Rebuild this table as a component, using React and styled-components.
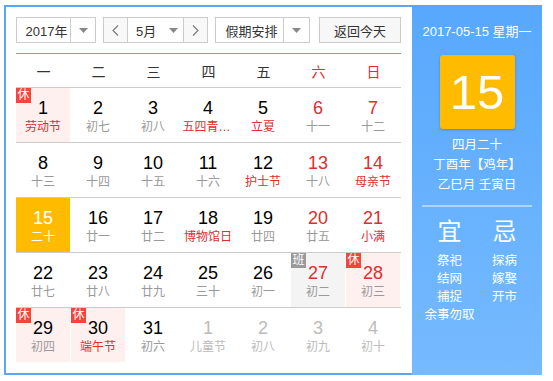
import React from 'react'
import styled, { createGlobalStyle } from 'styled-components'

const GlobalStyle = createGlobalStyle`
  body {
    margin: 0;
    background: #fff;
    font-family: "Liberation Sans", "Noto Sans CJK SC", sans-serif;
  }
`

const Frame = styled.div`
  display: flex;
  width: 538px;
  height: 370px;
  margin: 5px 0 0 4px;
  background: #5ca6f4;
`

const Main = styled.div`
  width: 385px;
  margin: 2px 0 2px 2px;
  padding: 10px 11px 0 10px;
  background: #fff;
`

const Toolbar = styled.div`
  display: flex;
  height: 26px;
  gap: 7px;
`

const Select = styled.div`
  display: flex;
  box-sizing: border-box;
  width: ${p => p.$w}px;
  height: 26px;
  border: 1px solid #ccc;
  background: #fff;
`

const SelectLabel = styled.div`
  flex: 1;
  display: flex;
  align-items: center;
  justify-content: ${p => (p.$left ? 'flex-start' : 'center')};
  padding-left: ${p => p.$pad || 0}px;
  font-size: 13px;
  color: #333;
`

const ArrowBox = styled.div`
  display: flex;
  align-items: center;
  justify-content: center;
  width: ${p => p.$w || 23}px;
  border-left: ${p => (p.$noline ? 'none' : '1px solid #ccc')};
  border-right: ${p => (p.$rline ? '1px solid #ccc' : 'none')};
  background: ${p => p.$bg || '#fff'};
`

const TodayButton = styled.button`
  box-sizing: border-box;
  width: 82px;
  height: 26px;
  margin-left: auto;
  padding: 0;
  border: 1px solid #ccc;
  background: #f7f7f7;
  font-family: inherit;
  font-size: 13px;
  color: #333;
`

const Calendar = styled.div`
  margin-top: 10px;
  border-top: 1px solid #5ca6f4;
`

const WeekHeader = styled.div`
  display: grid;
  grid-template-columns: repeat(7, 55px);
  height: 33px;
  border-bottom: 1px solid #ccc;
`

const WeekDay = styled.div`
  display: flex;
  align-items: center;
  justify-content: center;
  font-size: 14px;
  color: ${p => (p.$weekend ? '#e02d2d' : '#333')};
`

const Week = styled.div`
  display: grid;
  grid-template-columns: repeat(7, 55px);
  border-bottom: 1px solid #ccc;
  &:last-child {
    border-bottom: none;
  }
`

const cellBg = { rest: '#fff0f0', work: '#f4f4f4', today: '#ffbb00' }

const Day = styled.div`
  position: relative;
  box-sizing: border-box;
  width: 54px;
  height: 54px;
  padding-top: 10px;
  text-align: center;
  background: ${p => cellBg[p.$kind] || '#fff'};
`

const DayNum = styled.div`
  font-size: 18px;
  line-height: 20px;
  color: ${p => p.$color};
`

const DayNote = styled.div`
  max-width: 51px;
  margin: 1px auto 0;
  overflow: hidden;
  white-space: nowrap;
  text-overflow: ellipsis;
  font-size: 12px;
  line-height: 16px;
  color: ${p => p.$color};
`

const Badge = styled.span`
  position: absolute;
  left: 0;
  top: 0;
  width: 15px;
  height: 15px;
  background: ${p => (p.$work ? '#999' : '#f5443a')};
  color: #fff;
  font-size: 12px;
  line-height: 15px;
  text-align: center;
`

const Side = styled.div`
  display: flex;
  flex-direction: column;
  align-items: center;
  box-sizing: border-box;
  width: 130px;
  padding-top: 20px;
  background: linear-gradient(#57a8fd, #76baff);
  color: #fff;
`

const SideDate = styled.div`
  font-size: 13px;
  line-height: 14px;
`

const BigDay = styled.div`
  width: 75px;
  height: 74px;
  margin-top: 16px;
  border-radius: 3px;
  background: #ffbb00;
  box-shadow: 0 1px 3px rgba(0, 0, 0, 0.2);
  font-size: 49px;
  line-height: 74px;
  text-align: center;
`

const LunarInfo = styled.div`
  margin-top: 6px;
  font-size: 12.5px;
  line-height: 20px;
  text-align: center;
`

const Divider = styled.div`
  align-self: stretch;
  height: 2px;
  margin: 10px 10px 0;
  background: rgba(255, 255, 255, 0.45);
`

const Omens = styled.div`
  display: grid;
  grid-template-columns: 55px 55px;
  margin-top: 11px;
`

const OmenColumn = styled.div`
  display: flex;
  flex-direction: column;
  align-items: center;
`

const OmenTitle = styled.div`
  margin-bottom: 6px;
  font-size: 24px;
  line-height: 28px;
`

const OmenItem = styled.div`
  font-size: 12.5px;
  line-height: 18px;
  white-space: nowrap;
`

const Caret = () => (
  <svg width="9" height="5" viewBox="0 0 9 5">
    <path d="M0 0h9L4.5 5z" fill="#888" />
  </svg>
)

const Chevron = ({ dir }) => (
  <svg width="7" height="11" viewBox="0 0 7 11">
    <path
      d={dir === 'left' ? 'M6 0.5L1 5.5L6 10.5' : 'M1 0.5L6 5.5L1 10.5'}
      fill="none"
      stroke="#777"
      strokeWidth="1.1"
    />
  </svg>
)

// n: number, t: note, h: holiday name, w: weekend, b: badge, o: other month
const weeks = [
  [
    { n: 1, t: '劳动节', h: 1, b: 'rest' },
    { n: 2, t: '初七' },
    { n: 3, t: '初八' },
    { n: 4, t: '五四青年节', h: 1 },
    { n: 5, t: '立夏', h: 1 },
    { n: 6, t: '十一', w: 1 },
    { n: 7, t: '十二', w: 1 },
  ],
  [
    { n: 8, t: '十三' },
    { n: 9, t: '十四' },
    { n: 10, t: '十五' },
    { n: 11, t: '十六' },
    { n: 12, t: '护士节', h: 1 },
    { n: 13, t: '十八', w: 1 },
    { n: 14, t: '母亲节', h: 1, w: 1 },
  ],
  [
    { n: 15, t: '二十', today: 1 },
    { n: 16, t: '廿一' },
    { n: 17, t: '廿二' },
    { n: 18, t: '博物馆日', h: 1 },
    { n: 19, t: '廿四' },
    { n: 20, t: '廿五', w: 1 },
    { n: 21, t: '小满', h: 1, w: 1 },
  ],
  [
    { n: 22, t: '廿七' },
    { n: 23, t: '廿八' },
    { n: 24, t: '廿九' },
    { n: 25, t: '三十' },
    { n: 26, t: '初一' },
    { n: 27, t: '初二', w: 1, b: 'work' },
    { n: 28, t: '初三', w: 1, b: 'rest' },
  ],
  [
    { n: 29, t: '初四', b: 'rest' },
    { n: 30, t: '端午节', h: 1, b: 'rest' },
    { n: 31, t: '初六' },
    { n: 1, t: '儿童节', o: 1 },
    { n: 2, t: '初八', o: 1 },
    { n: 3, t: '初九', o: 1 },
    { n: 4, t: '初十', o: 1 },
  ],
]

const weekDays = ['一', '二', '三', '四', '五', '六', '日']

function DayCell({ d }) {
  let numColor = d.w ? '#e02d2d' : '#000'
  let noteColor = d.h ? '#e02d2d' : '#999'
  if (d.o) {
    numColor = '#bbb'
    noteColor = '#bbb'
  }
  if (d.today) {
    numColor = '#fff'
    noteColor = '#fff'
  }
  return (
    <Day $kind={d.today ? 'today' : d.b}>
      {d.b && <Badge $work={d.b === 'work'}>{d.b === 'work' ? '班' : '休'}</Badge>}
      <DayNum $color={numColor}>{d.n}</DayNum>
      <DayNote $color={noteColor}>{d.t}</DayNote>
    </Day>
  )
}

export default function App() {
  return (
    <>
      <GlobalStyle />
      <Frame>
        <Main>
          <Toolbar>
            <Select $w={80}>
              <SelectLabel $pad={6}>2017年</SelectLabel>
              <ArrowBox $w={24}>
                <Caret />
              </ArrowBox>
            </Select>
            <Select $w={105}>
              <ArrowBox $w={23} $noline $rline $bg="#f8f8f8">
                <Chevron dir="left" />
              </ArrowBox>
              <SelectLabel $left $pad={8}>5月</SelectLabel>
              <ArrowBox $w={20} $noline>
                <Caret />
              </ArrowBox>
              <ArrowBox $w={23} $bg="#f8f8f8">
                <Chevron dir="right" />
              </ArrowBox>
            </Select>
            <Select $w={95}>
              <SelectLabel $pad={4}>假期安排</SelectLabel>
              <ArrowBox $w={25}>
                <Caret />
              </ArrowBox>
            </Select>
            <TodayButton>返回今天</TodayButton>
          </Toolbar>
          <Calendar>
            <WeekHeader>
              {weekDays.map((w, i) => (
                <WeekDay key={w} $weekend={i > 4}>
                  {w}
                </WeekDay>
              ))}
            </WeekHeader>
            {weeks.map((week, i) => (
              <Week key={i}>
                {week.map((d, j) => (
                  <DayCell key={j} d={d} />
                ))}
              </Week>
            ))}
          </Calendar>
        </Main>
        <Side>
          <SideDate>2017-05-15 星期一</SideDate>
          <BigDay>15</BigDay>
          <LunarInfo>
            <div>四月二十</div>
            <div>丁酉年【鸡年】</div>
            <div>乙巳月 壬寅日</div>
          </LunarInfo>
          <Divider />
          <Omens>
            <OmenColumn>
              <OmenTitle>宜</OmenTitle>
              <OmenItem>祭祀</OmenItem>
              <OmenItem>结网</OmenItem>
              <OmenItem>捕捉</OmenItem>
              <OmenItem>余事勿取</OmenItem>
            </OmenColumn>
            <OmenColumn>
              <OmenTitle>忌</OmenTitle>
              <OmenItem>探病</OmenItem>
              <OmenItem>嫁娶</OmenItem>
              <OmenItem>开市</OmenItem>
            </OmenColumn>
          </Omens>
        </Side>
      </Frame>
    </>
  )
}
